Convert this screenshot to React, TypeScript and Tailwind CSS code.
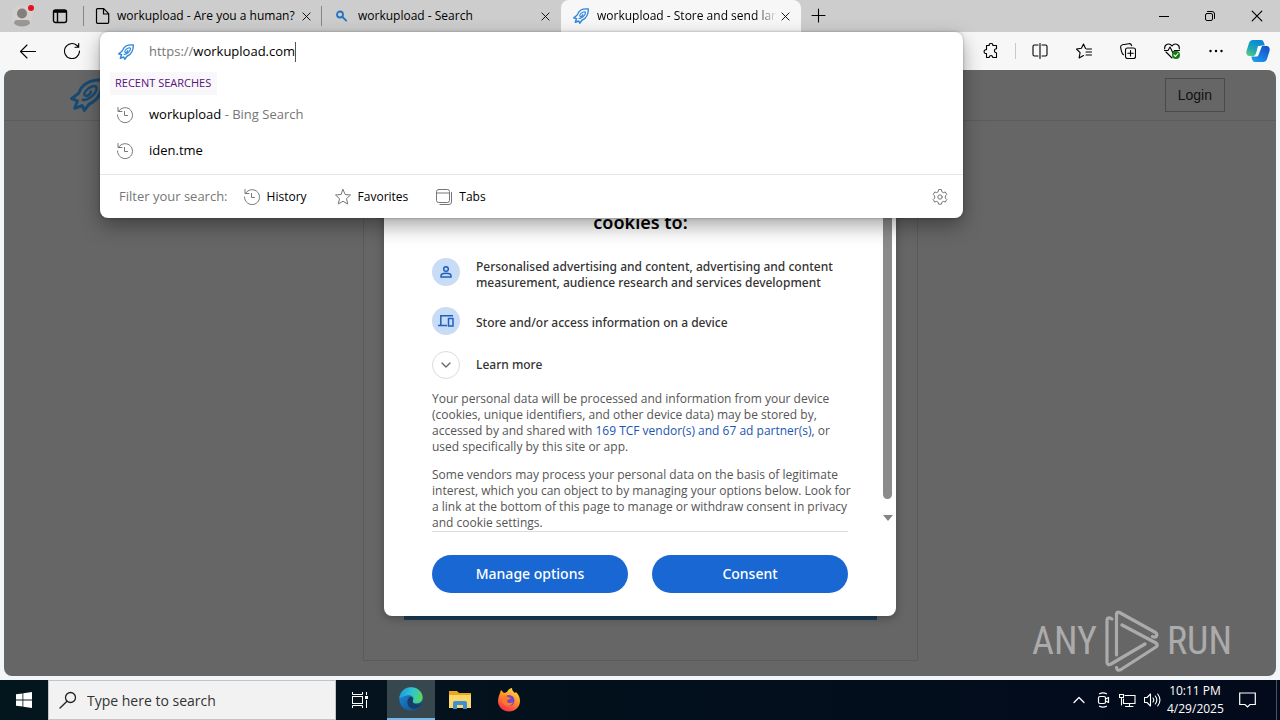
import type { ReactNode, SVGProps } from "react";

type IconProps = SVGProps<SVGSVGElement>;

function Icon({ children, ...rest }: IconProps & { children: ReactNode }) {
  return (
    <svg viewBox="0 0 16 16" width="16" height="16" fill="none" stroke="currentColor" strokeWidth="1" strokeLinecap="round" strokeLinejoin="round" aria-hidden="true" {...rest}>
      {children}
    </svg>
  );
}

function Rocket(props: IconProps) {
  return (
    <svg viewBox="0 0 32 32" width="16" height="16" fill="none" stroke="#2f86dd" strokeWidth="2.800" strokeLinejoin="round" strokeLinecap="round" aria-hidden="true" {...props}>
      <path d="M30.500 2C22 1 13 4 9.500 11.500L8 14.500 1.500 19.500 7 21.500 4.500 28.500 11.500 26 13.500 30.500 18 24.500C27 21 31 11 30.500 2Z" />
      <path d="M12 20.500c4 1 13-5 13-11 0-4-8-1-10.500 3-2.500 4 .5 5.500 3 3.500 1.500-1.200 2.500-2.500 2-3.500" strokeWidth="2.300" />
    </svg>
  );
}

function CloseIcon({ size = 10 }: { size?: number }) {
  return (
    <Icon viewBox="0 0 10 10" width={size} height={size}>
      <path d="m1 1 8 8M9 1 1 9" />
    </Icon>
  );
}

function HistoryIcon(props: IconProps) {
  return (
    <Icon viewBox="0 0 18 18" width="18" height="18" stroke="#767676" {...props}>
      <path d="M2.600 5.200A7.500 7.500 0 1 1 1.500 9M2 1.500v4h4M8.500 5.500V9.500h3" />
    </Icon>
  );
}

function BrowserTab({ icon, title, active, divider }: { icon: ReactNode; title: string; active?: boolean; divider?: boolean }) {
  return (
    <div className={active ? "flex h-full w-60 items-center rounded-t-lg bg-[#f7f7f7] pr-2 pl-3" : "relative flex h-full w-[239px] items-center pr-2 pl-3"}>
      {icon}
      <span className={active ? "ml-2 flex-1 overflow-hidden whitespace-nowrap [mask-image:linear-gradient(to_right,black_88%,transparent)]" : "ml-2 flex-1 overflow-hidden whitespace-nowrap"}>
        {title}
      </span>
      <button type="button" aria-label={"Close " + title} className="flex size-4 shrink-0 items-center justify-center">
        <CloseIcon size={9} />
      </button>
      {divider && <span className="absolute top-1.5 right-0 h-5 w-px bg-[#858585]" />}
    </div>
  );
}

function TabStrip() {
  return (
    <header className="flex h-8 shrink-0 items-center bg-[#cdcdcd] text-[12px]">
      <button type="button" aria-label="Profile" className="ml-3 flex size-6 shrink-0">
        <svg viewBox="0 0 24 24" width="24" height="24" aria-hidden="true">
          <circle cx="10" cy="12" r="11" fill="#d3d0ce" />
          <circle cx="10" cy="9.500" r="5" fill="#827f7d" />
          <path d="M2 19.500Q2 16 5 16h10q3 0 3 3.500-3 3-8 3t-8-3Z" fill="#999694" />
          <circle cx="19" cy="4" r="3" fill="#e81123" />
        </svg>
      </button>
      <button type="button" aria-label="Tab actions" className="ml-4 shrink-0">
        <Icon strokeWidth="1.400">
          <rect x="1.500" y="2" width="13" height="12.500" rx="2" />
          <path d="M2 4h12M2 3h12M5.500 5v9" />
        </Icon>
      </button>
      <span className="ml-[15px] h-5 w-px bg-[#858585]" />
      <nav className="-ml-px flex h-full" aria-label="Tabs">
        <BrowserTab
          title="workupload - Are you a human?"
          divider
          icon={
            <Icon strokeWidth="1.200" className="-mr-0.5 shrink-0">
              <path d="M2.500.7h6.200l5 5v8.600a1 1 0 0 1-1 1H2.500a1 1 0 0 1-1-1V1.700a1 1 0 0 1 1-1ZM8.500 1v5h5" />
            </Icon>
          }
        />
        <BrowserTab
          title="workupload - Search"
          icon={
            <Icon stroke="#2674c0" strokeWidth="1.800" className="shrink-0">
              <circle cx="6" cy="6.500" r="3" />
              <path d="m8.500 9 3.700 3.700" />
            </Icon>
          }
        />
        <BrowserTab title="workupload - Store and send large files" active icon={<Rocket className="shrink-0" />} />
      </nav>
      <button type="button" aria-label="New tab" className="ml-2.5">
        <Icon strokeWidth="1.100">
          <path d="M1 7.500h13M7.500 1v13" />
        </Icon>
      </button>
      <div className="ml-auto flex items-center gap-9 pr-[17px]">
        <button type="button" aria-label="Minimize">
          <Icon viewBox="0 0 10 10" width="10" height="10">
            <path d="M0 5.500h10" strokeLinecap="butt" />
          </Icon>
        </button>
        <button type="button" aria-label="Restore">
          <Icon viewBox="0 0 10 10" width="10" height="10">
            <rect x=".5" y="2.500" width="7" height="7" rx="1.500" />
            <path d="M2.500.5H7A2.500 2.500 0 0 1 9.500 3v4.500" />
          </Icon>
        </button>
        <button type="button" aria-label="Close window">
          <CloseIcon size={12} />
        </button>
      </div>
    </header>
  );
}

function Suggestion({ children }: { children: ReactNode }) {
  return (
    <li className="flex h-9 items-center pl-4 text-[13px]">
      <HistoryIcon className="shrink-0" />
      <span className="ml-[15px]">{children}</span>
    </li>
  );
}

function AddressPanel() {
  return (
    <div className="absolute inset-x-0 top-0 z-20 rounded-lg bg-white shadow-[0_8px_20px_rgba(0,0,0,0.35),0_0_3px_rgba(0,0,0,0.3)]">
      <div className="flex h-10 items-center pl-[18px] text-[13px]">
        <Rocket />
        <label htmlFor="address" className="ml-[15px] text-[#767676]">
          https://
        </label>
        <input id="address" aria-label="Address" defaultValue="workupload.com" className="field-sizing-content bg-transparent outline-none" />
        <span className="h-5 w-px bg-[#555555]" />
      </div>
      <h2 className="ml-2.5 flex h-[23px] w-[107px] items-center bg-[#f8f7f9] pl-[5px] text-[11px] whitespace-nowrap text-[#5c0f7d]">RECENT SEARCHES</h2>
      <ul className="mt-0.5">
        <Suggestion>
          workupload <span className="text-[#767676]">- Bing Search</span>
        </Suggestion>
        <Suggestion>iden.tme</Suggestion>
      </ul>
      <div className="mt-[5px] flex h-11 items-center border-t border-[#e6e6e6] pr-[15px] pl-[19px] text-[12px]">
        <span className="text-[13px] text-[#767676]">Filter your search:</span>
        <button type="button" className="ml-[15px] flex items-center gap-1.5">
          <HistoryIcon />
          History
        </button>
        <button type="button" className="ml-[27px] flex items-center gap-1.5">
          <Icon viewBox="0 0 18 18" width="18" height="18" stroke="#767676">
            <path d="m9 1.500 2.200 5 5.300.5-4 3.600 1.200 5.400L9 13.200 4.300 16l1.200-5.400-4-3.600 5.300-.5Z" />
          </Icon>
          Favorites
        </button>
        <button type="button" className="ml-[27px] flex items-center gap-1.5">
          <Icon viewBox="0 0 18 18" width="18" height="18" stroke="#767676">
            <rect x="1.500" y="1.500" width="13" height="13" rx="2" />
            <path d="M1.500 5h13M16.500 4.500V14a2.500 2.500 0 0 1-2.500 2.500H5" />
          </Icon>
          Tabs
        </button>
        <button type="button" aria-label="Search settings" className="ml-auto">
          <Icon viewBox="0 0 16 16" stroke="#767676">
            <circle cx="8" cy="8" r="2.200" />
            <path d="m6.600.8-.5 2-1.400.8-2-.6L1.200 5.500 2.700 7v2l-1.500 1.500L2.700 13l2-.6 1.400.8.5 2h2.800l.5-2 1.400-.8 2 .6 1.500-2.500L13.300 9V7l1.500-1.500L13.300 3l-2 .6-1.400-.8-.5-2Z" />
          </Icon>
        </button>
      </div>
    </div>
  );
}

function Copilot() {
  return (
    <svg viewBox="0 0 24 24" width="24" height="24" aria-hidden="true">
      <defs>
        <linearGradient id="cpA" x1="0" y1="1" x2=".6" y2="0">
          <stop offset="0" stopColor="#63d46f" />
          <stop offset=".45" stopColor="#1fa8b8" />
          <stop offset="1" stopColor="#0a86d4" />
        </linearGradient>
        <linearGradient id="cpB" x1="0" y1="1" x2=".8" y2="0">
          <stop offset="0" stopColor="#1ca7ee" />
          <stop offset="1" stopColor="#1550cc" />
        </linearGradient>
      </defs>
      <path d="M7 1h8c2 0 2.500 1.500 3 3l.8 2.500H16c-2 0-3 1-3.500 3L11 14c-.6 2-1.500 3-3.500 3H3.500C.8 17-.2 14.500.5 12L3 4c.7-2 2-3 4-3Z" fill="url(#cpA)" />
      <path d="M17 23H9c-2 0-2.500-1.500-3-3l-.7-2.500H8c2 0 3-1 3.500-3L13 10c.6-2 1.500-3 3.500-3h4c2.700 0 3.700 2.500 3 5L21 20c-.7 2-2 3-4 3Z" fill="url(#cpB)" />
      <path d="M12 7h4l-3.500 9-1 1.500H8l2-3Z" fill="#fff" />
    </svg>
  );
}

function Toolbar() {
  return (
    <div className="flex h-[38px] shrink-0 items-center bg-[#f7f7f7] pr-2.5">
      <button type="button" aria-label="Back" className="ml-5">
        <Icon strokeWidth="1.100">
          <path d="M15.500 8.500H.7M7 2 .5 8.500 7 15" />
        </Icon>
      </button>
      <button type="button" aria-label="Refresh" className="ml-7">
        <Icon strokeWidth="1.100">
          <path d="M15.500 8A7.500 7.500 0 1 1 13 2.500l1.500 1.500M14.700.5V4.200H11" />
        </Icon>
      </button>
      <div className="relative ml-5 h-full min-w-0 flex-1">
        <AddressPanel />
      </div>
      <div className="ml-5 flex items-center">
        <button type="button" aria-label="Extensions">
          <Icon strokeWidth="1.100">
            <path d="M3.500 2.500h2.700c-.4-3 4-3 3.600 0h3.700v3.300c-2.800-.3-2.800 4.200 0 3.900v4.800H9.800c.3-2.500-3.900-2.500-3.600 0H3.500v-4C.3 11 .3 6.300 3.500 6.700Z" />
          </Icon>
        </button>
        <span className="ml-4 h-4 w-px bg-[#c8c8c8]" />
        <div className="ml-4 flex items-center gap-7">
          <button type="button" aria-label="Split screen">
            <Icon strokeWidth="1.100">
              <path d="M6 2H2.500A1.500 1.500 0 0 0 1 3.500v8A1.500 1.500 0 0 0 2.500 13H6M10 2h3.500A1.500 1.500 0 0 1 15 3.500v8a1.500 1.500 0 0 1-1.500 1.500H10M8 .5v15" />
            </Icon>
          </button>
          <button type="button" aria-label="Favorites">
            <Icon strokeWidth="1.100">
              <path d="M9.500 5.500 7.500 1 5.400 5.300.5 6l3.600 3.600-1 5.400 4.400-2.500M10.500 6h5M10 9h5.500M10 12h5.500" />
            </Icon>
          </button>
          <button type="button" aria-label="Collections">
            <Icon strokeWidth="1.100">
              <rect x="5.500" y="5" width="10" height="10.500" rx="2" />
              <path d="M10.500 7.500v5.500M7.800 10.200h5.500M3.500 11.800C1.800 11 .8 5.500.6 4.200.5 2.500 1.500 2 2.500 1.800L9 .7c1.500-.2 2.300.6 2.700 2" />
            </Icon>
          </button>
          <button type="button" aria-label="Browser essentials">
            <Icon strokeWidth="1.100">
              <path d="M.7 6C.2 1 5.500-.5 8 3c2.500-3.500 7.800-2 7.300 3M2 9l6 6M.5 7.500H4L6 4l3 6 1.500-2.500h5" />
              <circle cx="12" cy="12" r="4" fill="#107c10" stroke="none" />
              <path d="m10 12 1.500 1.500L14 10.500" stroke="#fff" />
            </Icon>
          </button>
          <button type="button" aria-label="Settings and more">
            <Icon fill="currentColor" stroke="none">
              <circle cx="2.500" cy="8" r="1.200" />
              <circle cx="8" cy="8" r="1.200" />
              <circle cx="13.500" cy="8" r="1.200" />
            </Icon>
          </button>
        </div>
        <button type="button" aria-label="Copilot" className="ml-[22px]">
          <Copilot />
        </button>
      </div>
    </div>
  );
}

function ConsentDialog() {
  return (
    <div role="dialog" aria-label="Cookie consent" className="flex h-[486px] w-lg flex-col rounded-lg bg-white font-['Noto_Sans',sans-serif] shadow-[0_2px_10px_rgba(0,0,0,0.3)]">
      <div className="flex min-h-0 flex-1">
        <div className="flex-1 overflow-hidden pt-20 pl-12 text-[12px] leading-4">
          <h2 className="mr-8 text-center text-[18px] leading-6 font-semibold text-black">cookies to:</h2>
          <ul className="mt-[25px] font-medium text-[#333333]">
            <li className="flex items-center gap-4">
              <span className="-mt-1.5 flex size-7 shrink-0 items-center justify-center rounded-full bg-[#c8dcf6] text-[#1f5fc0]">
                <Icon viewBox="0 0 16 16" strokeWidth="1.500">
                  <circle cx="8" cy="5" r="2.300" />
                  <path d="M3 13v-1.200C3 10 6 9.300 8 9.300s5 .7 5 2.500V13Z" strokeLinejoin="miter" />
                </Icon>
              </span>
              <span>
                Personalised advertising and content, advertising and content
                <br />
                measurement, audience research and services development
              </span>
            </li>
            <li className="mt-4 flex items-center gap-4">
              <span className="flex size-7 shrink-0 items-center justify-center rounded-full bg-[#c8dcf6] text-[#1f5fc0]">
                <Icon strokeWidth="1.500" strokeLinejoin="miter" strokeLinecap="butt">
                  <path d="M15 2.800H2.800v9M0 12.500h9" />
                  <rect x="10.500" y="5.500" width="4.500" height="7.500" />
                </Icon>
              </span>
              <span className="pt-1">Store and/or access information on a device</span>
            </li>
            <li className="mt-4 flex items-center">
              <button type="button" className="flex items-center gap-4">
                <span className="flex size-7 items-center justify-center rounded-full border border-[#dadce0] text-[#666666]">
                  <Icon viewBox="0 0 10 10" width="10" height="10" strokeWidth="1.300">
                    <path d="m1 3 4 4 4-4" />
                  </Icon>
                </span>
                Learn more
              </button>
            </li>
          </ul>
          <div className="mt-3 mr-6 flex flex-col gap-3 font-['Open_Sans',sans-serif] text-[#555555]">
            <p>
              Your personal data will be processed and information from your device (cookies, unique identifiers, and other device data) may be stored by, accessed by and shared with{" "}
              <a href="#vendors" className="text-[#1a56b0]">
                169 TCF vendor(s) and 67 ad partner(s)
              </a>
              , or used specifically by this site or app.
            </p>
            <p>
              Some vendors may process your personal data on the basis of legitimate interest, which you can object to by managing your options below. Look for a link at the bottom of this page to manage or withdraw consent in privacy and cookie settings.
            </p>
          </div>
        </div>
        <div className="flex w-[15px] flex-col items-center pr-0.5 pb-2.5">
          <span className="w-[9px] flex-1 rounded-full bg-[#8b8b8b]" />
          <svg viewBox="0 0 10 6" width="10" height="6" className="mt-4" aria-hidden="true">
            <path d="M0 0h10L5 6Z" fill="#858585" />
          </svg>
        </div>
      </div>
      <div className="mr-12 ml-12 flex gap-6 border-t border-[#dadce0] py-[23px] text-[14px] font-medium text-white">
        <button type="button" className="h-[38px] flex-1 rounded-full bg-[#1967d2] pb-0.5">
          Manage options
        </button>
        <button type="button" className="h-[38px] flex-1 rounded-full bg-[#1967d2] pb-0.5">
          Consent
        </button>
      </div>
    </div>
  );
}

function Watermark() {
  return (
    <div className="absolute right-11 bottom-0 flex h-[70px] items-center gap-2 font-['Roboto_Condensed','Liberation_Sans_Narrow',sans-serif] text-[38px] font-normal text-[#ababab]">
      <span>ANY</span>
      <svg viewBox="0 0 54 62" width="54" height="62" fill="none" stroke="#ababab" strokeWidth="3.200" strokeLinejoin="round" strokeLinecap="round" aria-hidden="true">
        <path d="M11.500 45V4.500q0-3.500 3-2L50.500 22.500q2 1.500 1 3.500-1.500 2-4 .5" />
        <path d="M7 9Q2 6 2 11v41q0 4 4 2L40 34" />
        <path d="M17 15l34 18q2.500 2 0 4L16 59.500q-4 2-4.500-2" />
      </svg>
      <span>RUN</span>
    </div>
  );
}

function Page() {
  return (
    <main className="relative mx-1 mb-1 flex min-h-0 flex-1 flex-col overflow-hidden rounded-lg bg-[#666666]">
      <div className="flex h-[51px] shrink-0 items-center justify-between border-b border-[#5c5c5c] pr-[51px] pl-[66px]">
        <Rocket width="34" height="34" stroke="#174a73" />
        <button type="button" className="h-[34px] border border-[#4a4a4a] px-3 font-['Liberation_Sans',sans-serif] text-[14px] text-[#111111]">
          Login
        </button>
      </div>
      <section className="mx-auto mt-4 mb-[15px] flex w-[555px] flex-1 flex-col justify-end border border-[#5b5b5b] px-10 pb-10">
        <div className="h-10 bg-[#1c3d57]" />
      </section>
      <div className="absolute inset-0 flex items-center justify-center">
        <ConsentDialog />
      </div>
      <Watermark />
    </main>
  );
}

function EdgeLogo() {
  return (
    <svg viewBox="0 0 24 24" width="24" height="24" aria-hidden="true">
      <defs>
        <linearGradient id="edgeTop" x1="0" y1=".4" x2="1" y2=".6">
          <stop offset="0" stopColor="#2296df" />
          <stop offset=".5" stopColor="#2fc5d0" />
          <stop offset="1" stopColor="#5bd65b" />
        </linearGradient>
        <linearGradient id="edgeLow" x1="0" y1="0" x2="1" y2="1">
          <stop offset="0" stopColor="#1b8edb" />
          <stop offset="1" stopColor="#114a8c" />
        </linearGradient>
      </defs>
      <circle cx="12" cy="12" r="11.700" fill="url(#edgeLow)" />
      <path d="M.3 11.500C1 4.500 6 .3 12 .3c7 0 11.700 5 11.700 10 0 4-3 6-6.200 6-3.500 0-4.500-1.500-3.500-3 1.300-2.500-.5-5-4-5-4 0-7 2-9.700 3.200Z" fill="url(#edgeTop)" />
      <path d="M14 13.300c-1 2 .5 4.200 4 4.200 2 0 3.500-.7 4.700-1.500C20 22 14 23 11 20.500 7 17.500 8 12 11 9.800c2.500.3 3.700 2 3 3.500Z" fill="#173c66" />
    </svg>
  );
}

function FolderLogo() {
  return (
    <svg viewBox="0 0 22 20" width="22" height="20" aria-hidden="true">
      <path d="M0 1h8l2 2h12v15H0Z" fill="#e9a820" />
      <path d="M0 5h22v13H0Z" fill="#fbd867" />
      <path d="M4 19v-6q0-2 2-2h10q2 0 2 2v6h-4v-4H8v4Z" fill="#3d8fd6" />
    </svg>
  );
}

function FirefoxLogo() {
  return (
    <svg viewBox="0 0 24 24" width="24" height="24" aria-hidden="true">
      <defs>
        <linearGradient id="fox" x1=".8" y1="0" x2=".3" y2="1">
          <stop offset="0" stopColor="#ffe14a" />
          <stop offset=".45" stopColor="#ff9626" />
          <stop offset="1" stopColor="#f4284f" />
        </linearGradient>
      </defs>
      <path d="M3 5l1-3 3 3 3-1c1-2 3-4 5-4 0 3 2 4 3 5l1-1c3 3 4 6 4 9 0 6-5 10.500-11 10.500S1 19 1 13c0-3 1-5 2-8Z" fill="url(#fox)" />
      <circle cx="12" cy="12.500" r="5.500" fill="#7445cf" />
      <path d="M6 8c2-1 4 0 5 1l3 1c-1 2-4 1-4 3s3 3 6 1c-1 4-5 5-8 3-3-2-4-6-2-9Z" fill="#ff7a28" />
    </svg>
  );
}

function Taskbar() {
  return (
    <footer className="flex h-10 shrink-0 items-center bg-[linear-gradient(to_right,#04161d,#020a1c)] text-white">
      <button type="button" aria-label="Start" className="flex h-full w-12 items-center justify-center">
        <svg viewBox="0 0 16 16" width="16" height="16" fill="#fff" aria-hidden="true">
          <path d="M0 2.300 6.500 1.400v6.200H0ZM7.300 1.300 16 0v7.600H7.300ZM0 8.400h6.500v6.200L0 13.700ZM7.300 8.400H16V16l-8.700-1.300Z" />
        </svg>
      </button>
      <label className="flex h-full w-72 items-center border border-[#c4c4c4] bg-[#f2f2f2] pl-2.5 text-[#222222]">
        <Icon viewBox="0 0 18 18" width="18" height="18" strokeWidth="1.300">
          <circle cx="11.500" cy="6.500" r="5" />
          <path d="M8 10.200 1 17" />
        </Icon>
        <input aria-label="Type here to search" placeholder="Type here to search" className="ml-2.5 min-w-0 flex-1 bg-transparent text-[14px] outline-none placeholder:text-[#333333]" />
      </label>
      <button type="button" aria-label="Task view" className="flex h-full w-[51px] items-center justify-center pr-1">
        <Icon viewBox="0 0 16 16" strokeLinecap="butt" strokeLinejoin="miter">
          <path d="M.5 0v2.500h10V0M.5 16v-2.500h10V16M14.500 0v3M14.500 8v8" />
          <rect x=".5" y="4.500" width="10" height="7" />
          <rect x="13.500" y="4.500" width="2" height="2" fill="#fff" />
        </Icon>
      </button>
      <button type="button" aria-label="Microsoft Edge" className="flex h-full w-12 items-center justify-center border-b-2 border-[#76b9ed] bg-[#36474d]">
        <EdgeLogo />
      </button>
      <button type="button" aria-label="File Explorer" className="flex h-full w-[49px] items-center justify-center">
        <FolderLogo />
      </button>
      <button type="button" aria-label="Firefox" className="flex h-full w-[49px] items-center justify-center">
        <FirefoxLogo />
      </button>
      <div className="ml-auto flex h-full items-center">
        <button type="button" aria-label="Show hidden icons">
          <Icon viewBox="0 0 12 12" width="12" height="12" strokeWidth="1.300">
            <path d="m1 8.500 5-5 5 5" />
          </Icon>
        </button>
        <Icon viewBox="0 0 14 16" width="14" height="16" className="ml-3" strokeWidth="1.200">
          <rect x="1.500" y="4.500" width="7" height="7" rx="1.500" />
          <path d="m8.500 7 3-1.500v5L8.500 9M2.500 1.800Q6 0 9.500 1.800M2.500 14.200Q6 16 9.500 14.200" />
        </Icon>
        <Icon className="ml-2" viewBox="0 0 17 16" width="17" height="16" strokeLinejoin="miter" strokeWidth="1.100">
          <path d="M6 3.500h10v8H4.500V7M10.500 11.500V14M6.500 14.500h7.500M.5 2.500h4v3h-4ZM2.500 5.500V13" />
        </Icon>
        <Icon className="ml-2" viewBox="0 0 17 16" width="17" height="16" strokeWidth="1.100">
          <path d="M.5 5.500H3l3.500-3.500v12L3 10.500H.5ZM9 6q1.500 2 0 4M11.300 4q3 4 0 8M13.700 2q4.500 6 0 12" />
        </Icon>
        <div className="ml-1.5 w-14 text-center text-[12px] leading-[18px] whitespace-nowrap">
          <div>10:11 PM</div>
          <div>4/29/2025</div>
        </div>
        <button type="button" aria-label="Notifications" className="ml-4">
          <Icon viewBox="0 0 17 16" width="17" height="16" strokeLinejoin="miter" strokeWidth="1.200">
            <path d="M.7 1h15.600v11.500H11L8.500 15 6 12.500H.7Z" />
          </Icon>
        </button>
        <span className="ml-5 h-full w-1 border-l border-[#4b5563]" />
      </div>
    </footer>
  );
}

export default function App() {
  return (
    <div className="flex h-screen flex-col bg-[#f3f6f8] font-['Open_Sans','Noto_Sans',sans-serif] text-black">
      <TabStrip />
      <Toolbar />
      <Page />
      <Taskbar />
    </div>
  );
}
